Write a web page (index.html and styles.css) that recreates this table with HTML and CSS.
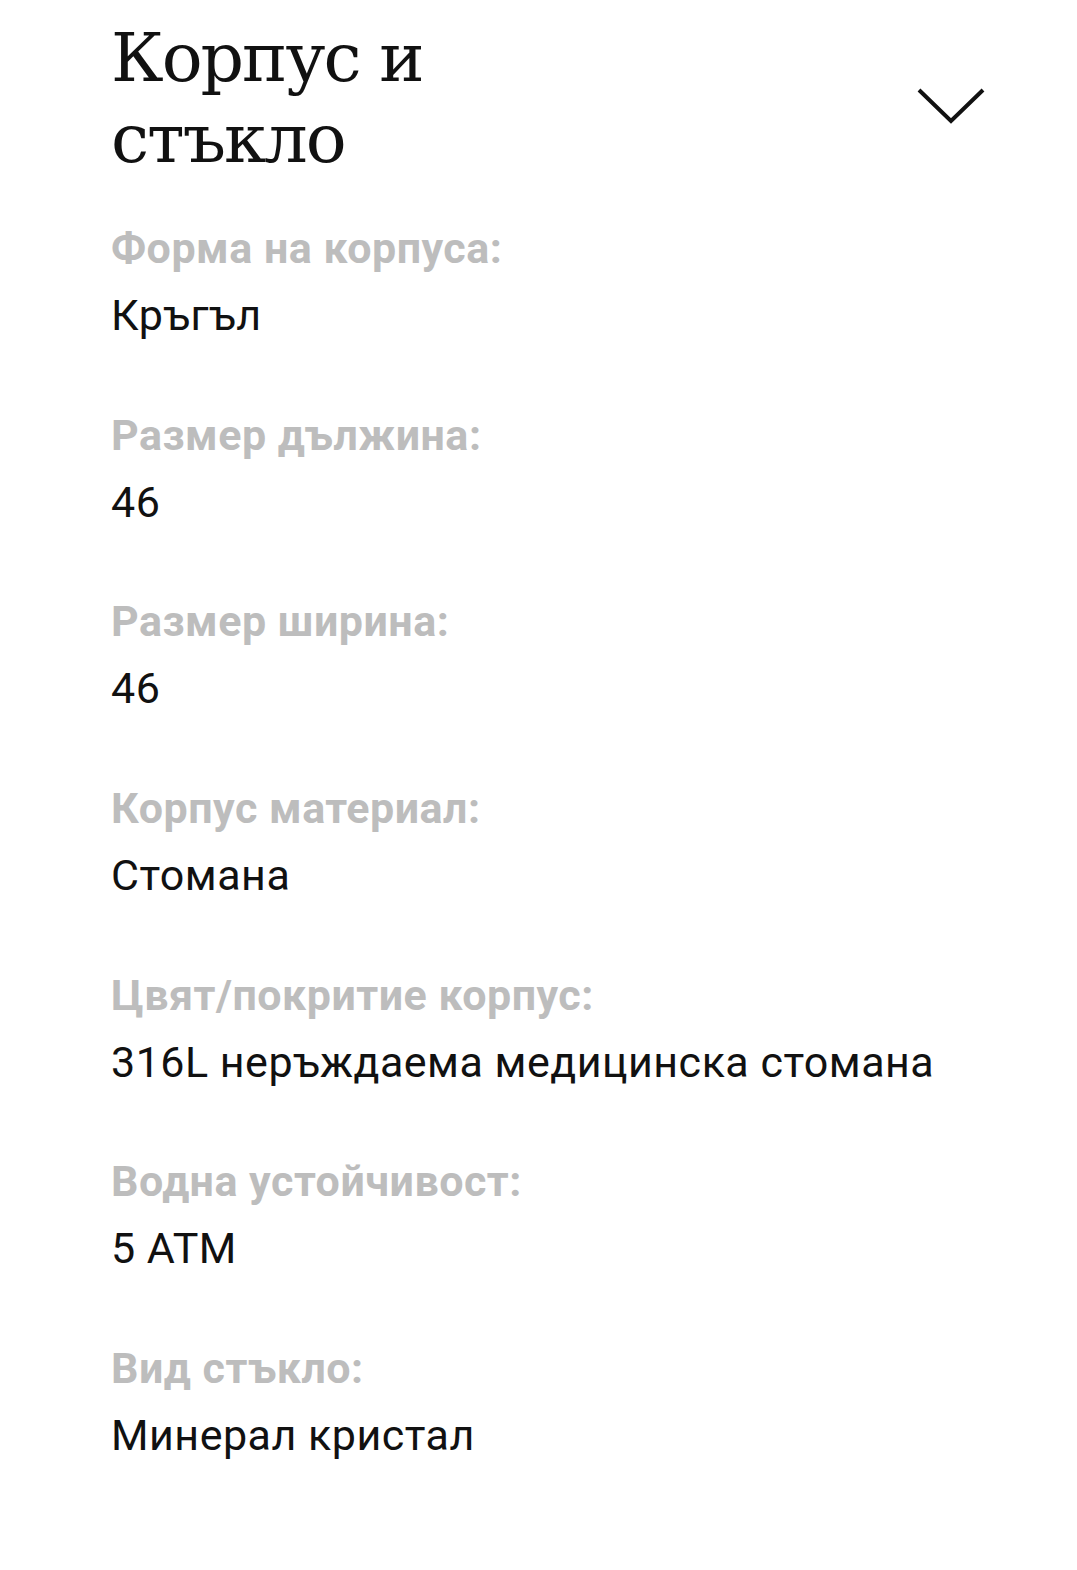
FILE: index.html
```html
<!DOCTYPE html>
<html lang="bg">
<head>
<meta charset="utf-8">
<link rel="stylesheet" href="styles.css">
</head>
<body>
<section class="panel">
  <header class="panel-head">
    <h2 class="title" lang="bg">Корпус и<br>стъкло</h2>
    <svg class="chevron" viewBox="0 0 68 36" width="68" height="36" aria-hidden="true">
      <polyline points="2,2 34,33 66,2" fill="none" stroke="#111" stroke-width="4"/>
    </svg>
  </header>
  <dl class="specs">
    <div class="spec"><dt>Форма на корпуса:</dt><dd>Кръгъл</dd></div>
    <div class="spec"><dt>Размер дължина:</dt><dd>46</dd></div>
    <div class="spec"><dt>Размер ширина:</dt><dd>46</dd></div>
    <div class="spec"><dt>Корпус материал:</dt><dd>Стомана</dd></div>
    <div class="spec"><dt>Цвят/покритие корпус:</dt><dd>316L неръждаема медицинска стомана</dd></div>
    <div class="spec"><dt>Водна устойчивост:</dt><dd>5 ATM</dd></div>
    <div class="spec"><dt>Вид стъкло:</dt><dd>Минерал кристал</dd></div>
  </dl>
</section>
</body>
</html>
```
FILE: styles.css
```css
html, body {
  margin: 0;
  background: #fff;
}
.panel {
  padding: 16.5px 92px 0 111px;
}
.panel-head {
  display: flex;
  justify-content: space-between;
  align-items: flex-start;
}
.title {
  margin: 0;
  font-family: "DejaVu Serif", "Liberation Serif", serif;
  font-weight: normal;
  font-size: 68px;
  line-height: 81px;
  letter-spacing: -2px;
  color: #111;
}
.chevron {
  display: block;
  margin-top: 71.5px;
}
.specs {
  margin: 36.5px 0 0;
  font-family: Roboto, "Noto Sans", sans-serif;
}
.spec {
  display: flex;
  flex-direction: column;
  margin-bottom: 52.7px;
}
.spec dt {
  font-weight: bold;
  font-size: 43px;
  line-height: 67px;
  letter-spacing: 0.5px;
  color: #bdbdbd;
}
.spec dd {
  margin: 0;
  font-size: 43px;
  line-height: 67px;
  letter-spacing: 0.5px;
  color: #111;
}
```
